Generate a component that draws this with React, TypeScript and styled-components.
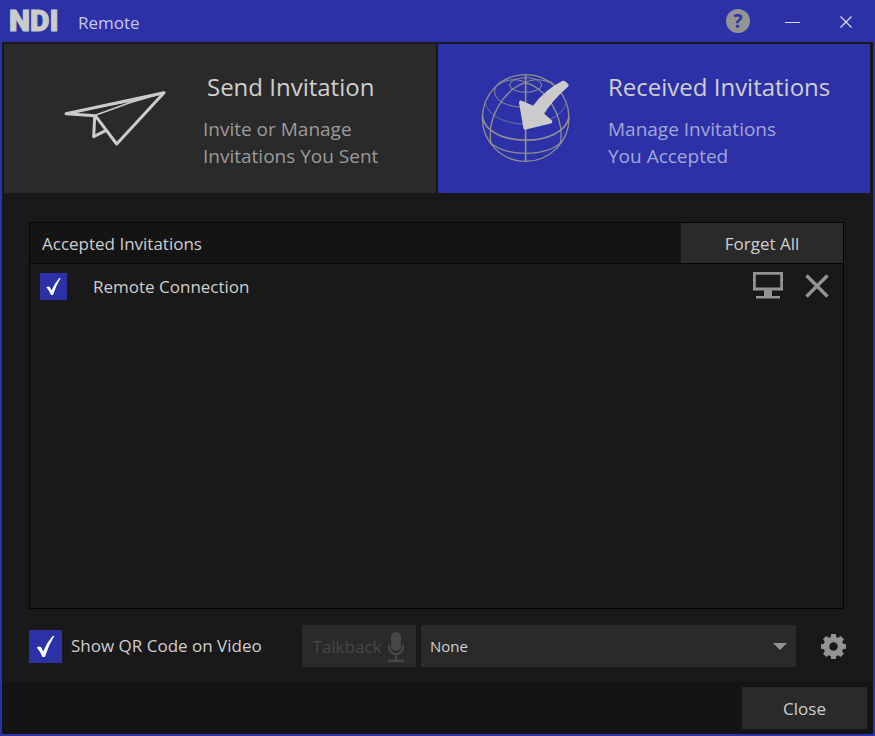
import React, { useState } from "react";
import styled, { createGlobalStyle } from "styled-components";

const GlobalStyle = createGlobalStyle`
  *, *::before, *::after { box-sizing: border-box; }
  body { margin: 0; background: #191919; }
  button, input, select { font: inherit; color: inherit; margin: 0; }
`;

const blue = "#2d31a8";
const raised = "#2a2a2a";
const ink = "#cfcfcf";

const Window = styled.div`
  display: flex;
  flex-direction: column;
  min-height: 100vh;
  border: 2px solid ${blue};
  border-top: 0;
  background: #191919;
  color: ${ink};
  font-family: "Open Sans", "Segoe UI", sans-serif;
  font-size: 17px;
  line-height: 24px;
`;

const TitleBar = styled.header`
  display: flex;
  align-items: center;
  height: 42px;
  padding: 0 15px 0 7px;
  background: ${blue};
`;

const Logo = styled.span`
  width: 51px;
  font-family: Roboto, sans-serif;
  font-size: 30px;
  font-weight: 900;
  line-height: 42px;
  color: #cbcbcb;
  -webkit-text-stroke: 1px #cbcbcb;
`;

const AppName = styled.h1`
  flex: 1;
  margin: 4px 0 0 18px;
  font-size: 17px;
  font-weight: 400;
  color: #c6c8ea;
`;

const TitleActions = styled.div`
  display: flex;
  align-items: center;
  gap: 30px;
`;

const IconButton = styled.button`
  display: flex;
  align-items: center;
  justify-content: center;
  padding: 0;
  border: 0;
  background: none;
  color: #939393;
  cursor: pointer;
  svg { display: block; }
`;

const HelpButton = styled(IconButton)`
  width: 24px;
  height: 24px;
  border-radius: 50%;
  background: #939393;
  color: ${blue};
  font-size: 19px;
  font-weight: 700;
  line-height: 24px;
`;

const CaptionButton = styled(IconButton)`
  width: 24px;
  height: 24px;
  margin-top: 2px;
  color: #dcdcf2;
`;

const Tabs = styled.nav`
  display: grid;
  grid-template-columns: 1fr 1fr;
  gap: 2px;
  padding: 2px 3px 0 2px;
`;

const Tab = styled.button<{ $active?: boolean }>`
  display: grid;
  grid-template-columns: ${(p) => (p.$active ? "90px" : "102px")} max-content;
  column-gap: 37px;
  justify-content: start;
  align-items: center;
  height: 149px;
  padding: 0 0 0 ${(p) => (p.$active ? "43px" : "60px")};
  border: 0;
  background: ${(p) => (p.$active ? blue : raised)};
  color: ${(p) => (p.$active ? "#a3a6d9" : "#9b9b9b")};
  text-align: left;
  cursor: pointer;
  svg { display: block; }
`;

const TabText = styled.span`
  display: flex;
  flex-direction: column;
  gap: 13px;
  padding-top: 3px;
`;

const TabTitle = styled.span`
  font-size: 24px;
  line-height: 32px;
  text-align: center;
  color: ${ink};
`;

const TabNote = styled.span`
  font-size: 19px;
  line-height: 27px;
`;

const Body = styled.main`
  display: flex;
  flex: 1;
  flex-direction: column;
  gap: 16px;
  padding: 29px 27px 15px 27px;
`;

const Panel = styled.section`
  flex: 1;
  margin-right: 2px;
  border: 1px solid #050505;
`;

const PanelHeader = styled.div`
  display: flex;
  align-items: stretch;
  justify-content: space-between;
  height: 41px;
  border-bottom: 1px solid #050505;
  background: #141414;
`;

const PanelTitle = styled.h2`
  margin: 0 0 0 12px;
  font-size: 17px;
  font-weight: 400;
  line-height: 41px;
`;

const FlatButton = styled.button<{ $width: number }>`
  width: ${(p) => p.$width}px;
  padding: 2px 0 0;
  border: 0;
  background: ${raised};
  cursor: pointer;
`;

const InviteList = styled.ul`
  margin: 0;
  padding: 0;
  list-style: none;
`;

const InviteRow = styled.li`
  display: flex;
  align-items: center;
  justify-content: space-between;
  height: 45px;
  padding: 0 14px 0 10px;
`;

const CheckLabel = styled.label<{ $gap: number }>`
  display: flex;
  align-items: center;
  gap: ${(p) => p.$gap}px;
  cursor: pointer;
`;

const CheckCell = styled.span<{ $size: number }>`
  display: grid;
  width: ${(p) => p.$size}px;
  height: ${(p) => p.$size}px;
  > * { grid-area: 1 / 1; width: 100%; height: 100%; }
  svg { pointer-events: none; }
`;

const CheckInput = styled.input`
  appearance: none;
  background: ${blue};
  cursor: pointer;
`;

const RowActions = styled.div`
  display: flex;
  align-items: center;
  gap: 22px;
  padding-bottom: 2px;
`;

const Controls = styled.div`
  display: flex;
  align-items: center;
  height: 42px;
`;

const TalkbackButton = styled.button`
  display: flex;
  align-items: center;
  justify-content: center;
  gap: 6px;
  width: 114px;
  height: 42px;
  margin-left: auto;
  padding: 2px 0 0;
  border: 0;
  background: ${raised};
  color: #474747;
`;

const SelectCell = styled.div`
  display: grid;
  flex: 0 1 375px;
  align-items: center;
  height: 42px;
  margin: 0 25px 0 5px;
  > * { grid-area: 1 / 1; }
  svg { justify-self: end; margin-right: 9px; pointer-events: none; }
`;

const Select = styled.select`
  appearance: none;
  width: 100%;
  height: 42px;
  padding: 0 32px 0 9px;
  border: 0;
  border-radius: 0;
  background: ${raised};
  font-size: 15px;
`;

const Footer = styled.footer`
  display: flex;
  justify-content: flex-end;
  height: 52px;
  padding: 5px 6px;
  background: #141414;
`;

function PaperPlane() {
  return (
    <svg width="102" height="56" viewBox="43 92 306 168" fill="none" stroke="#cbcbcb" strokeWidth="9" strokeLinecap="round" strokeLinejoin="round" aria-hidden="true">
      <path d="M137 166 L49 160 L343 97 L201 251 Z" />
      <path d="M135 170 L132 229 L168 211" />
      <path d="M137 165 L240 127 L343 97" strokeWidth="5" />
      <path d="M62 157 L240 123" strokeWidth="4" />
    </svg>
  );
}

function GlobeArrow() {
  return (
    <svg width="90" height="90" viewBox="154 40 270 270" fill="none" stroke="#8f908f" strokeWidth="4" aria-hidden="true">
      <circle cx="288" cy="172" r="130" />
      <path d="M288 42 V302" strokeWidth="5" />
      <path d="M158 167 C170 262 406 262 418 167" strokeWidth="5" />
      <path d="M180 243 C220 290 356 290 396 243" />
      <path d="M166 126 C190 212 386 212 410 126" strokeWidth="2" />
      <path d="M212 62 C170 100 210 140 288 140 C366 140 406 100 364 62" strokeWidth="3" />
      <ellipse cx="288" cy="73" rx="48" ry="22" strokeWidth="3" />
      <path d="M288 66 C225 85 170 170 184 250 M288 66 C351 85 406 170 392 250" />
      <path d="M288 66 C265 52 230 55 205 72 M288 66 C311 52 346 55 371 72" strokeWidth="3" />
      <path d="M402 66 C368 82 338 108 312 142 L274 126 L287 201 L362 183 L336 160 C354 130 380 101 411 74 Z" fill="#cbcbcb" stroke="#cbcbcb" strokeWidth="12" strokeLinejoin="round" />
    </svg>
  );
}

function MonitorIcon() {
  return (
    <svg width="30" height="27" viewBox="0 0 30 27" aria-hidden="true">
      <path d="M1.4 1.4 H28.6 V17 H1.4 Z" fill="none" stroke="currentColor" strokeWidth="2.8" />
      <path d="M11 17 H19 V24 H11 Z M3 24 H27 V26.4 H3 Z" fill="currentColor" />
    </svg>
  );
}

function CrossIcon() {
  return (
    <svg width="24" height="24" viewBox="0 0 24 24" aria-hidden="true">
      <path d="M1.5 1.5 L22.5 22.5 M22.5 1.5 L1.5 22.5" stroke="currentColor" strokeWidth="3.4" />
    </svg>
  );
}

function MicIcon() {
  return (
    <svg width="18" height="32" viewBox="0 0 18 32" aria-hidden="true">
      <rect x="4" y="1" width="10" height="19" rx="5" fill="currentColor" />
      <path d="M2 15 C2 26 16 26 16 15 M9 23 V29 M2 30 H16" fill="none" stroke="currentColor" strokeWidth="2.4" strokeLinecap="round" />
    </svg>
  );
}

function GearIcon() {
  return (
    <svg width="25" height="25" viewBox="-38 -38 76 76" aria-hidden="true">
      <circle r="21.5" fill="none" stroke="currentColor" strokeWidth="17" />
      {[0, 45, 90, 135, 180, 225, 270, 315].map((angle) => (
        <path key={angle} d="M-9 -26 L-7 -38 H7 L9 -26 Z" fill="currentColor" transform={`rotate(${angle})`} />
      ))}
    </svg>
  );
}

function Check({ size, gap, text }: { size: number; gap: number; text: string }) {
  const [checked, setChecked] = useState(true);
  return (
    <CheckLabel $gap={gap}>
      <CheckCell $size={size}>
        <CheckInput type="checkbox" checked={checked} onChange={(e) => setChecked(e.target.checked)} />
        {checked && (
          <svg viewBox="0 0 81 81" aria-hidden="true">
            <path d="M19 43 Q26 38 29 42 L35 52 Q43 32 58 15 L62 15 Q48 38 39 66 L33 66 Q28 53 19 43 Z" fill="#fff" />
          </svg>
        )}
      </CheckCell>
      {text}
    </CheckLabel>
  );
}

export default function App() {
  return (
    <>
      <GlobalStyle />
      <Window>
        <TitleBar>
          <Logo>NDI</Logo>
          <AppName>Remote</AppName>
          <TitleActions>
            <HelpButton aria-label="Help">?</HelpButton>
            <CaptionButton aria-label="Minimize">
              <svg width="15" height="15" viewBox="0 0 15 15"><path d="M0 7.5 H15" stroke="currentColor" /></svg>
            </CaptionButton>
            <CaptionButton aria-label="Close window">
              <svg width="12" height="12" viewBox="0 0 12 12"><path d="M0.5 0.5 L11.5 11.5 M11.5 0.5 L0.5 11.5" stroke="currentColor" strokeWidth="1.2" /></svg>
            </CaptionButton>
          </TitleActions>
        </TitleBar>
        <Tabs>
          <Tab>
            <PaperPlane />
            <TabText>
              <TabTitle>Send Invitation</TabTitle>
              <TabNote>Invite or Manage<br />Invitations You Sent</TabNote>
            </TabText>
          </Tab>
          <Tab $active aria-current="page">
            <GlobeArrow />
            <TabText>
              <TabTitle>Received Invitations</TabTitle>
              <TabNote>Manage Invitations<br />You Accepted</TabNote>
            </TabText>
          </Tab>
        </Tabs>
        <Body>
          <Panel>
            <PanelHeader>
              <PanelTitle>Accepted Invitations</PanelTitle>
              <FlatButton $width={162}>Forget All</FlatButton>
            </PanelHeader>
            <InviteList>
              <InviteRow>
                <Check size={27} gap={26} text="Remote Connection" />
                <RowActions>
                  <IconButton aria-label="Select screen"><MonitorIcon /></IconButton>
                  <IconButton aria-label="Forget invitation"><CrossIcon /></IconButton>
                </RowActions>
              </InviteRow>
            </InviteList>
          </Panel>
          <Controls>
            <Check size={33} gap={9} text="Show QR Code on Video" />
            <TalkbackButton disabled>Talkback<MicIcon /></TalkbackButton>
            <SelectCell>
              <Select aria-label="Talkback source" defaultValue="None">
                <option>None</option>
              </Select>
              <svg width="14" height="7" viewBox="0 0 14 7" aria-hidden="true"><path d="M0 0 H14 L7 7 Z" fill="#939393" /></svg>
            </SelectCell>
            <IconButton aria-label="Settings"><GearIcon /></IconButton>
          </Controls>
        </Body>
        <Footer>
          <FlatButton $width={125}>Close</FlatButton>
        </Footer>
      </Window>
    </>
  );
}
